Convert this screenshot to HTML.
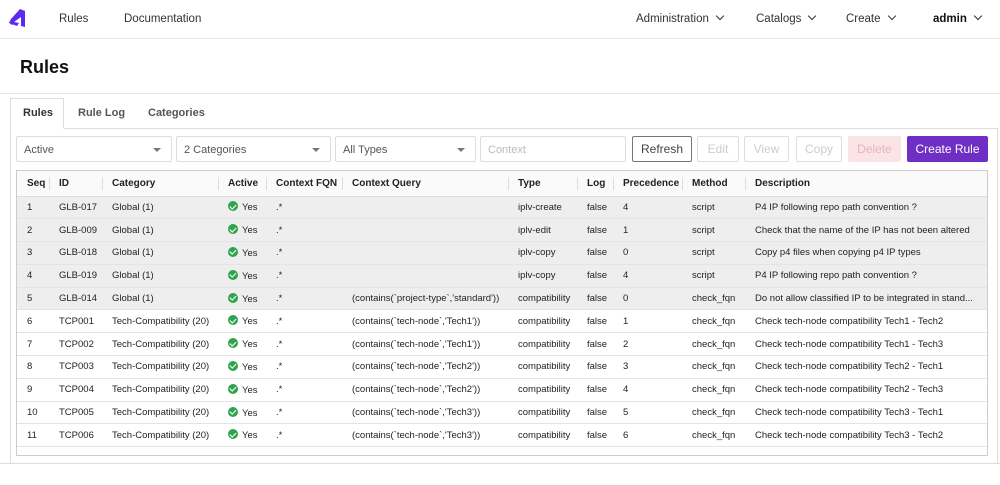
<!DOCTYPE html>
<html><head><style>
*{box-sizing:border-box;margin:0;padding:0}
body{width:1000px;height:485px;background:#fff;font-family:"Liberation Sans","DejaVu Sans",sans-serif;color:#222;position:relative;overflow:hidden}
.nav{position:absolute;left:0;top:0;width:1000px;height:39px;border-bottom:1px solid #e6e6e6}
.nav span{position:absolute;top:13px;font-size:11.5px;color:#333}
.caret{display:inline-block;width:6px;height:6px;border-right:1.5px solid #333;border-bottom:1.5px solid #333;transform:rotate(45deg);margin-left:8px;position:relative;top:-3px}
h1{position:absolute;left:20px;top:57px;font-size:18px;font-weight:bold;color:#111}
.hr2{position:absolute;left:0;top:93px;width:1000px;border-top:1px solid #e6e6e6}
.panel{position:absolute;left:10px;top:128px;width:988px;height:336px;border:1px solid #ddd;border-bottom:none}
.bot{position:absolute;left:0;top:463px;width:1000px;border-top:1px solid #ddd}
.tab{position:absolute;top:107px;font-size:11px;font-weight:bold;color:#555}
.acttab{position:absolute;left:10px;top:98px;width:54px;height:31px;border:1px solid #ddd;border-bottom:1px solid #fff;background:#fff}
.sel{position:absolute;top:136px;height:26px;border:1px solid #ddd;border-radius:2px;font-size:11px;color:#555;padding:7px 7px}
.sel i{position:absolute;right:10px;top:11px;border:4px solid transparent;border-top:4px solid #777}
.btn{position:absolute;top:136px;height:26px;border:1px solid #ddd;border-radius:2px;font-size:12px;color:#ccc;text-align:center;line-height:24px}
.tbl{position:absolute;left:16px;top:170px;width:972px;height:286px;border:1px solid #ccc}
table{border-collapse:collapse;width:970px;font-size:9.5px;color:#222;table-layout:fixed}
th{height:25px;text-align:left;font-weight:bold;font-size:10px;border-bottom:1px solid #ddd;padding-left:10px;position:relative;background:#fafafa}
th+th:before{content:"";position:absolute;left:0;top:6px;height:13px;border-left:1px solid #ddd}
td{height:22.8px;padding-left:10px;border-bottom:1px solid #e4e4e4;white-space:nowrap;overflow:hidden}
tr.g td{background:#eee}
.ok{display:inline-block;width:10px;height:10px;border-radius:50%;background:#2da44e;vertical-align:-1px;margin-right:4px;position:relative}
.ok:after{content:"";position:absolute;left:3px;top:1.5px;width:2.5px;height:5px;border-right:1.5px solid #fff;border-bottom:1.5px solid #fff;transform:rotate(45deg)}
</style></head><body>
<div class="nav">
<svg style="position:absolute;left:8px;top:8px" width="19" height="20" viewBox="0 0 19 20"><path d="M12 1 L17 3 L17 19 L13 18 L13 9 L6 14 L11 15 L9 18 L1 15 L3 11 Z" fill="#5a2bf0"/><circle cx="4" cy="14.5" r="2.2" fill="#5a2bf0"/></svg>
<span style="left:59px">Rules</span>
<span style="left:124px">Documentation</span>
<span style="left:636px">Administration<b class="caret"></b></span>
<span style="left:756px">Catalogs<b class="caret"></b></span>
<span style="left:846px">Create<b class="caret"></b></span>
<span style="left:933px;font-weight:bold;color:#111">admin<b class="caret"></b></span>
</div>
<h1>Rules</h1>
<div class="hr2"></div>
<div class="panel"></div>
<div class="acttab"></div>
<div class="tab" style="left:23px;color:#333">Rules</div>
<div class="tab" style="left:78px">Rule Log</div>
<div class="tab" style="left:148px">Categories</div>
<div class="sel" style="left:16px;width:156px">Active<i></i></div>
<div class="sel" style="left:176px;width:155px">2 Categories<i></i></div>
<div class="sel" style="left:335px;width:141px">All Types<i></i></div>
<div class="sel" style="left:480px;width:146px;color:#bbb">Context</div>
<div class="btn" style="left:632px;width:60px;border-color:#777;color:#444">Refresh</div>
<div class="btn" style="left:697px;width:42px">Edit</div>
<div class="btn" style="left:744px;width:45px">View</div>
<div class="btn" style="left:796px;width:46px">Copy</div>
<div class="btn" style="left:848px;width:53px;background:#fbe4e6;border-color:#fbe4e6;color:#e8b4ba">Delete</div>
<div class="btn" style="left:907px;width:81px;background:#6f2fc4;border-color:#6f2fc4;color:#fff">Create Rule</div>
<div class="tbl"><table>
<colgroup><col style="width:32px"><col style="width:53px"><col style="width:116px"><col style="width:48px"><col style="width:76px"><col style="width:166px"><col style="width:69px"><col style="width:36px"><col style="width:69px"><col style="width:63px"><col></colgroup>
<tr><th>Seq</th><th>ID</th><th>Category</th><th>Active</th><th>Context FQN</th><th>Context Query</th><th>Type</th><th>Log</th><th>Precedence</th><th>Method</th><th>Description</th></tr>
<tr class="g"><td>1</td><td>GLB-017</td><td>Global (1)</td><td><b class="ok"></b>Yes</td><td>.*</td><td></td><td>iplv-create</td><td>false</td><td>4</td><td>script</td><td>P4 IP following repo path convention ?</td></tr>
<tr class="g"><td>2</td><td>GLB-009</td><td>Global (1)</td><td><b class="ok"></b>Yes</td><td>.*</td><td></td><td>iplv-edit</td><td>false</td><td>1</td><td>script</td><td>Check that the name of the IP has not been altered</td></tr>
<tr class="g"><td>3</td><td>GLB-018</td><td>Global (1)</td><td><b class="ok"></b>Yes</td><td>.*</td><td></td><td>iplv-copy</td><td>false</td><td>0</td><td>script</td><td>Copy p4 files when copying p4 IP types</td></tr>
<tr class="g"><td>4</td><td>GLB-019</td><td>Global (1)</td><td><b class="ok"></b>Yes</td><td>.*</td><td></td><td>iplv-copy</td><td>false</td><td>4</td><td>script</td><td>P4 IP following repo path convention ?</td></tr>
<tr class="g"><td>5</td><td>GLB-014</td><td>Global (1)</td><td><b class="ok"></b>Yes</td><td>.*</td><td>(contains(`project-type`,'standard'))</td><td>compatibility</td><td>false</td><td>0</td><td>check_fqn</td><td>Do not allow classified IP to be integrated in stand...</td></tr>
<tr><td>6</td><td>TCP001</td><td>Tech-Compatibility (20)</td><td><b class="ok"></b>Yes</td><td>.*</td><td>(contains(`tech-node`,'Tech1'))</td><td>compatibility</td><td>false</td><td>1</td><td>check_fqn</td><td>Check tech-node compatibility Tech1 - Tech2</td></tr>
<tr><td>7</td><td>TCP002</td><td>Tech-Compatibility (20)</td><td><b class="ok"></b>Yes</td><td>.*</td><td>(contains(`tech-node`,'Tech1'))</td><td>compatibility</td><td>false</td><td>2</td><td>check_fqn</td><td>Check tech-node compatibility Tech1 - Tech3</td></tr>
<tr><td>8</td><td>TCP003</td><td>Tech-Compatibility (20)</td><td><b class="ok"></b>Yes</td><td>.*</td><td>(contains(`tech-node`,'Tech2'))</td><td>compatibility</td><td>false</td><td>3</td><td>check_fqn</td><td>Check tech-node compatibility Tech2 - Tech1</td></tr>
<tr><td>9</td><td>TCP004</td><td>Tech-Compatibility (20)</td><td><b class="ok"></b>Yes</td><td>.*</td><td>(contains(`tech-node`,'Tech2'))</td><td>compatibility</td><td>false</td><td>4</td><td>check_fqn</td><td>Check tech-node compatibility Tech2 - Tech3</td></tr>
<tr><td>10</td><td>TCP005</td><td>Tech-Compatibility (20)</td><td><b class="ok"></b>Yes</td><td>.*</td><td>(contains(`tech-node`,'Tech3'))</td><td>compatibility</td><td>false</td><td>5</td><td>check_fqn</td><td>Check tech-node compatibility Tech3 - Tech1</td></tr>
<tr><td>11</td><td>TCP006</td><td>Tech-Compatibility (20)</td><td><b class="ok"></b>Yes</td><td>.*</td><td>(contains(`tech-node`,'Tech3'))</td><td>compatibility</td><td>false</td><td>6</td><td>check_fqn</td><td>Check tech-node compatibility Tech3 - Tech2</td></tr>
</table></div>
<div class="bot"></div>
</body></html>
